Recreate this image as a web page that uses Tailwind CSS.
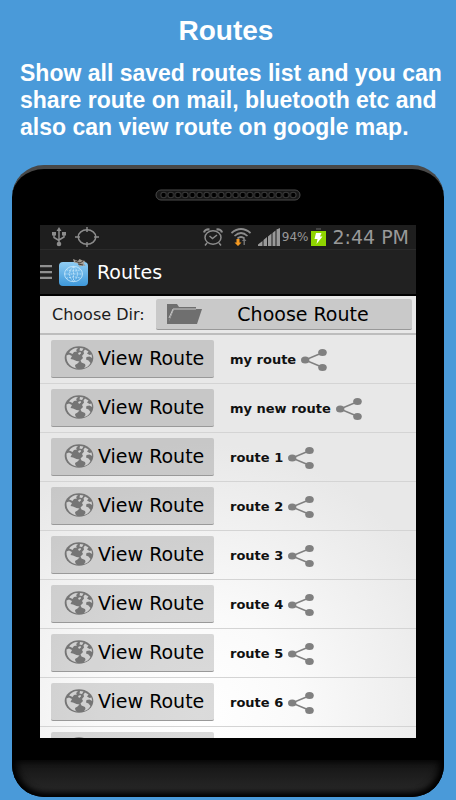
<!DOCTYPE html>
<html lang="en">
<head>
    <meta charset="UTF-8">
    <meta name="viewport" content="width=device-width, initial-scale=1.0">
    <title>Routes</title>
    <script src="https://cdn.jsdelivr.net/npm/@tailwindcss/browser@4"></script>
</head>
<body class="bg-[#4a9ad9] h-screen flex flex-col pb-[3px] font-['DejaVu_Sans',sans-serif]">
    <!-- Shared icons -->
    <svg class="hidden">
        <symbol id="icon-globe" viewBox="0 0 30 24" preserveAspectRatio="none">
            <ellipse cx="15" cy="12" rx="14.300" ry="11.700" fill="#757575"/>
            <path fill="#d0d0d0" d="M2.500 9.500L5 8.500l3 1.500-1.500 3 2.500.500 3.500 1.500 3 .500-2 2-2.500 1.500.500 2.500 1.500 1C8 21.500 2 18 2.500 9.500z"/>
            <path fill="#d0d0d0" d="M5 6.500C7 4 9.500 2.500 12 2l2 .500-2 1.500 1 1.500-3 .500-1.500 2L6.500 7z"/>
            <path fill="#d0d0d0" d="M16 2l3.500.500L18 5l-2.500-.500zM14 7l2.500-1 .500 1.500-2 1.500z"/>
            <path fill="#d0d0d0" d="M21 3.500l3.500 2-1.500 2 2.500 1.500 2-.500.700 3.500-2.700-1.500-3 .500-.500 2.500 2.500 1 2 2.500C25 20 22.500 21.500 20 22l1.500-2-.500-2-3.500-1.500-1-2L19 12l-1-2 2-2.500-.500-2z"/>
        </symbol>
        <symbol id="icon-share" viewBox="0 0 26 22">
            <path d="M22 3.500L4 11l18 7.500" fill="none" stroke="#808080" stroke-width="1.500"/>
            <ellipse cx="4.200" cy="11" rx="4.200" ry="3.500" fill="#808080"/>
            <ellipse cx="21.500" cy="3.500" rx="4.300" ry="3.500" fill="#808080"/>
            <ellipse cx="21.500" cy="18.500" rx="4.300" ry="3.500" fill="#808080"/>
        </symbol>
    </svg>

    <!-- Caption -->
    <header class="pt-4 pl-5 pr-2 text-white font-bold font-['Liberation_Sans',Arial,sans-serif]">
        <h1 class="text-[28px] leading-[30px] text-center pr-4">Routes</h1>
        <p class="mt-[14px] text-[23px] leading-[27px]">Show all saved routes list and you can share route on mail, bluetooth etc and also can view route on google map.</p>
    </header>

    <!-- Phone -->
    <div class="mt-6 mx-3 flex-1 min-h-0 flex flex-col bg-black rounded-[32px] overflow-hidden border-t-4 border-[#484848] pt-5">
        <svg class="h-[12px] w-[146px] mx-auto shrink-0" viewBox="0 0 146 12">
            <defs>
                <pattern id="holes" x="5" y="0" width="7.200" height="12" patternUnits="userSpaceOnUse">
                    <circle cx="3.600" cy="6" r="2.800" fill="#000" stroke="#3a3a3a" stroke-width="1"/>
                </pattern>
            </defs>
            <rect x="1" y="1" width="144" height="10" rx="5" fill="#181818" stroke="#4a4a4a"/>
            <rect x="5" y="2" width="137" height="8" rx="4" fill="url(#holes)"/>
        </svg>

        <main class="mt-6 mx-7 flex-1 min-h-0 flex flex-col overflow-hidden bg-[radial-gradient(circle_at_42%_95%,#ffffff_0%,#fafafa_100px,#e8e8e8_270px)]">
            <!-- Status bar -->
            <div class="h-6 shrink-0 bg-[#1e1e1e] text-[#999] flex items-center pl-3 pr-[7px]">
                <svg class="w-[14px] h-[20px]" viewBox="0 0 14 20" fill="none" stroke="#8c8c8c" stroke-width="1.500">
                    <path d="M7 3v14M2 6v4.500l5 3M12 6v4l-5 3"/>
                    <path d="M7 0l2.500 4h-5zM0 5h4v3.500H0zM10 5h4v3.500h-4z" fill="#8c8c8c" stroke="none"/>
                    <circle cx="7" cy="17" r="2.300" fill="#8c8c8c" stroke="none"/>
                </svg>
                <svg class="ml-[9px] w-[24px] h-[20px]" viewBox="0 0 24 20" fill="none" stroke="#8c8c8c" stroke-width="1.500">
                    <ellipse cx="12" cy="10" rx="8.800" ry="7.200"/>
                    <path d="M12 0v5M12 15v5M0 10h5M19 10h5"/>
                </svg>
                <svg class="ml-auto w-[20px] h-[18px]" viewBox="0 0 20 18" fill="none" stroke="#8c8c8c" stroke-width="1.500">
                    <ellipse cx="10" cy="9.500" rx="8" ry="6.700"/>
                    <path d="M6.500 8l3 2.500L14 7M4 15l-2 2.500M16 15l2 2.500"/>
                    <path d="M1 4.500C1.500 2 4 1 6.500 1.500M19 4.500C18.500 2 16 1 13.500 1.500" stroke-width="2.200"/>
                </svg>
                <svg class="ml-2 w-[20px] h-[18px]" viewBox="0 0 20 18" fill="none" stroke="#8c8c8c" stroke-width="1.700">
                    <path d="M.5 5Q10-3 19.500 5M3.500 8Q10 2 16.500 8M6.500 10.500Q10 7.500 13.500 10.500"/>
                    <path d="M5.500 11h3v3.500h2L7 18l-3.500-3.500h2z" fill="#f59a22" stroke="none"/>
                    <path d="M12.500 17v-4H11l2.200-3 2.200 3h-1.500v4z" fill="#777" stroke="none"/>
                </svg>
                <svg class="ml-[7px] w-[22px] h-[18px]" viewBox="0 0 22 18" fill="#999">
                    <path d="M0 18v-1.500L4.500 13v5zM5.500 18v-6L9 9v9zM10 18V8.500l3.500-3V18zM14.500 18V5l3-2.500V18zM18.500 18V1.500L22 0v18z"/>
                </svg>
                <span class="ml-[2px] text-[12px]">94%</span>
                <svg class="ml-[3px] w-[15px] h-[18px]" viewBox="0 0 15 18">
                    <path d="M5 0h5v2H5z" fill="#444"/>
                    <path d="M0 3h15v15H0z" fill="#8fd400"/>
                    <path d="M5 5h5.500L9 8.500h2.500L5.500 16l1-5H3.500z" fill="#fff"/>
                </svg>
                <span class="ml-[6px] text-[19px]">2:44 PM</span>
            </div>

            <!-- Action bar -->
            <div class="h-[47px] shrink-0 bg-[#212121] border-t border-t-[#2b2b2b] border-b-2 border-b-black flex items-center">
                <button type="button" aria-label="Open menu">
                    <svg class="w-[12px] h-[14px]" viewBox="0 0 12 14" fill="#909090">
                        <path d="M0 0h12v2.300H0zM0 6h12v2.300H0zM0 11.700h12V14H0z"/>
                    </svg>
                </button>
                <svg class="ml-[7px] w-[30px] h-[28px]" viewBox="0 0 30 28">
                    <defs>
                        <linearGradient id="sky" x1="0" y1="0" x2="0" y2="1">
                            <stop offset="0" stop-color="#90cdf3"/>
                            <stop offset="1" stop-color="#3e98da"/>
                        </linearGradient>
                    </defs>
                    <rect x="0" y="4" width="29" height="24" rx="4" fill="url(#sky)"/>
                    <g fill="none" stroke="#c9e8fb" stroke-width=".8">
                        <ellipse cx="14.500" cy="16" rx="9" ry="7.700"/>
                        <path d="M5.500 16h18M14.500 8.300v15.400M7 11.500q7.500 3 15 0M7 20.500q7.500-3 15 0M14.500 8.300q-8 7.700 0 15.400q8-7.700 0-15.400" stroke-dasharray="2 1"/>
                    </g>
                    <path d="M14 1l5 2 1.500-2 3 1.500 3 .5-2 2 2 3-3-.5-3 1-1.500-3-4-1z" fill="#a39c94"/>
                    <path d="M16 3l5 2 3-2M19 6l5 1" fill="none" stroke="#3a332d" stroke-width=".9"/>
                </svg>
                <h2 class="ml-2 text-[19px] text-white">Routes</h2>
            </div>

            <!-- Directory picker -->
            <div class="h-[39px] shrink-0 border-b-2 border-[#bdbdbd] flex items-center pl-3 pr-1">
                <span id="dir-label" class="text-[16px] text-[#1c1c1c]">Choose Dir:</span>
                <button type="button" aria-describedby="dir-label" class="ml-auto w-[256px] h-[31px] bg-[#c9c9c9] border-b border-[#999] rounded-xs flex items-center pl-[11px] pr-2 text-[19px] text-black">
                    <svg class="w-[35px] h-[20px]" viewBox="0 0 35 20">
                        <path d="M0 20V0h10l2 3h17v3H6L3 14l-1 6z" fill="#6f6f6f"/>
                        <path d="M1 20L7 5h28l-5 15z" fill="#6f6f6f"/>
                        <path d="M2 14L6 5h23" fill="none" stroke="#c9c9c9" stroke-width="1"/>
                    </svg>
                    <span class="flex-1 text-center">Choose Route</span>
                </button>
            </div>

            <!-- Saved routes, filled in below -->
            <ul id="route-list"></ul>
        </main>

        <!-- Bottom edge of the phone -->
        <div class="mt-[22px] h-[37px] shrink-0 rounded-b-[32px] bg-linear-to-b from-[#131313] via-[#1f1f1f] to-[#2b2b2b] shadow-[inset_0_-4px_6px_#000,inset_6px_0_8px_-2px_#000,inset_-6px_0_8px_-2px_#000]"></div>
    </div>

    <script>
        const routes = ['my route', 'my new route', 'route 1', 'route 2', 'route 3', 'route 4', 'route 5', 'route 6'];

        const rows = routes.map(name => `
            <li class="h-[49px] flex items-center pl-[11px] border-b border-[#d4d4d4]">
                <button type="button" class="w-[163px] h-[38px] bg-black/14 border-b border-[#999] rounded-xs flex items-center pl-[13px] text-[19px] text-black whitespace-nowrap">
                    <svg class="w-[30px] h-[24px] mr-1 mb-[2px] shrink-0"><use href="#icon-globe"/></svg>View Route
                </button>
                <span class="ml-4 pt-[2px] text-[13px] font-bold text-[#111]">${name}</span>
                <button type="button" aria-label="Share ${name}" class="ml-[5px] pt-[2px]">
                    <svg class="w-[26px] h-[22px]"><use href="#icon-share"/></svg>
                </button>
            </li>`);

        // next row, only its top edge is in view
        rows.push(`
            <li class="h-[49px] flex items-center pl-[11px]">
                <button type="button" aria-label="View Route" class="w-[163px] h-[38px] mb-[2px] bg-black/14 border-b border-[#999] rounded-xs flex items-center pl-[13px]">
                    <svg class="w-[30px] h-[24px] mb-[2px]"><use href="#icon-globe"/></svg>
                </button>
            </li>`);

        document.getElementById('route-list').innerHTML = rows.join('');
    </script>
</body>
</html>
